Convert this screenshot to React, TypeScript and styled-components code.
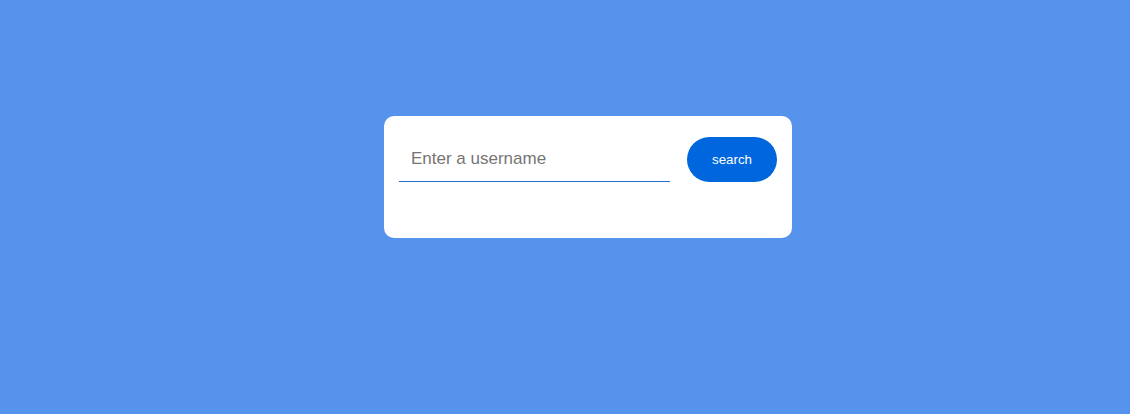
import styled, { createGlobalStyle } from 'styled-components';

const GlobalStyle = createGlobalStyle`
  html, body {
    margin: 0;
    padding: 0;
    background: #5593ec;
    font-family: 'Liberation Sans', Arial, sans-serif;
  }
`;

const Page = styled.div`
  min-height: 414px;
  display: flex;
  justify-content: center;
  align-items: flex-start;
  padding: 116px 0 0 46px;
  box-sizing: border-box;
`;

const Card = styled.div`
  width: 408px;
  height: 122px;
  box-sizing: border-box;
  background: #ffffff;
  border-radius: 10px;
  padding: 21px 15px;
`;

const SearchRow = styled.form`
  display: flex;
  align-items: flex-start;
  gap: 17px;
`;

const Input = styled.input`
  width: 271px;
  height: 45px;
  box-sizing: border-box;
  border: none;
  border-bottom: 1px solid #1f6fd6;
  outline: none;
  padding: 0 12px;
  font-family: 'Liberation Sans', Arial, sans-serif;
  font-size: 17px;
  color: #333;
  background: transparent;
  &::placeholder {
    color: #757575;
  }
`;

const Button = styled.button`
  width: 90px;
  height: 45px;
  border: none;
  border-radius: 23px;
  background: #0066dd;
  color: #ffffff;
  font-family: 'Liberation Sans', Arial, sans-serif;
  font-size: 13.33px;
  cursor: pointer;
`;

const App = () => {
  return (
    <>
      <GlobalStyle />
      <Page>
        <Card>
          <SearchRow onSubmit={(e) => e.preventDefault()}>
            <Input type="text" placeholder="Enter a username" />
            <Button type="submit">search</Button>
          </SearchRow>
        </Card>
      </Page>
    </>
  );
};

export default App;
